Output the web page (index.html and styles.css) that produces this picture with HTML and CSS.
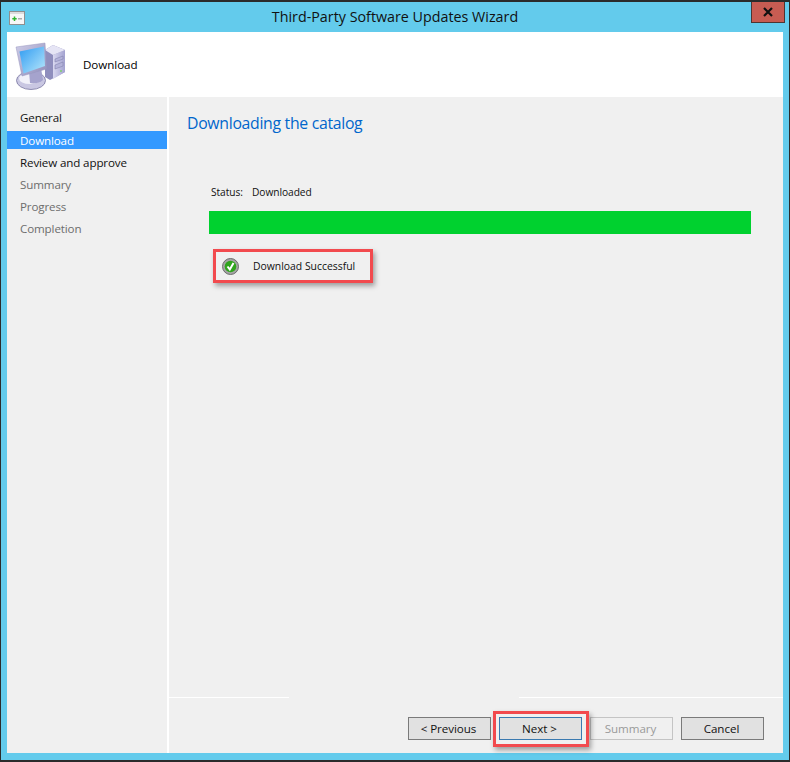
FILE: index.html
```html
<!DOCTYPE html>
<html lang="en">
<head>
<meta charset="utf-8">
<title>Third-Party Software Updates Wizard</title>
<link rel="stylesheet" href="styles.css">
</head>
<body>
<div class="window">
  <div class="titlebar">
    <svg class="app-icon" width="16" height="14" viewBox="0 0 16 14">
      <rect x="0.500" y="0.500" width="15" height="13" fill="#f7f7f7" stroke="#8f8f8f"/>
      <rect x="1" y="1" width="14" height="2" fill="#dcdcdc"/>
      <path d="M3.300 7.800h4.400M5.500 5.600v4.400" stroke="#2fb52f" stroke-width="1.500" fill="none"/>
      <path d="M9 7.800h4" stroke="#9a9a9a" stroke-width="1.200" fill="none"/>
    </svg>
    <div class="title">Third-Party Software Updates Wizard</div>
    <div class="close"><svg width="12" height="10" viewBox="0 0 12 10"><path d="M2 1l8 8M10 1l-8 8" stroke="#111" stroke-width="2.200" fill="none"/></svg></div>
  </div>
  <div class="client">
    <header class="banner">
      <svg class="computer" width="52" height="50" viewBox="0 0 52 50">
        <defs>
          <linearGradient id="scr" x1="0" y1="0" x2="1" y2="1"><stop offset="0" stop-color="#2f9bf2"/><stop offset="1" stop-color="#b8e8fb"/></linearGradient>
          <linearGradient id="tower" x1="0" y1="0" x2="1" y2="0"><stop offset="0" stop-color="#d9d8f0"/><stop offset="1" stop-color="#a3a2d0"/></linearGradient>
          <linearGradient id="bezel" x1="0" y1="0" x2="1" y2="1"><stop offset="0" stop-color="#cfcde8"/><stop offset="1" stop-color="#8f8db9"/></linearGradient>
        </defs>
        <path d="M30 8l8-5 12 5v22l-15 8-5-3z" fill="#8f8ebd"/>
        <path d="M38 13l12-5v22l-12 7z" fill="url(#tower)"/>
        <path d="M30 8l8-5 12 5-12 5z" fill="#e6e5f5"/>
        <path d="M40 17l8-3v3l-8 3zM40 23l8-3v4l-8 3z" fill="#b4b3da" stroke="#7b7aa6" stroke-width=".5"/>
        <circle cx="46" cy="29" r="1" fill="#7ccf6a"/>
        <ellipse cx="16" cy="38.500" rx="14.500" ry="9" fill="#c9c7e2" stroke="#77759f" stroke-width=".8"/>
        <ellipse cx="15" cy="36.500" rx="11" ry="5.500" fill="#f1f1f9"/>
        <path d="M14 29l12-3 2 12c-3 3-9 4-13 3z" fill="#a5a3cd"/>
        <path d="M1 5L30 1l1.500 26L7 34z" fill="url(#bezel)" stroke="#9896bf" stroke-width=".5"/>
        <path d="M4.500 9.500L29 4.500l1 19.500L8.500 31.500z" fill="url(#scr)"/>
      </svg>
      <span class="banner-text">Download</span>
    </header>
    <div class="body">
      <nav class="nav">
        <div class="nav-item">General</div>
        <div class="nav-item selected">Download</div>
        <div class="nav-item">Review and approve</div>
        <div class="nav-item muted">Summary</div>
        <div class="nav-item muted">Progress</div>
        <div class="nav-item muted">Completion</div>
      </nav>
      <main class="content">
        <div class="pane">
          <h1 class="heading">Downloading the catalog</h1>
          <div class="status"><span class="status-label">Status:</span><span>Downloaded</span></div>
          <div class="bar"></div>
          <div class="success">
            <svg width="17" height="17" viewBox="0 0 17 17">
              <circle cx="8.500" cy="8.500" r="8" fill="#a5a5a5" stroke="#6d6d6d"/>
              <circle cx="8.500" cy="8.500" r="5.800" fill="#2fa41c"/>
              <path d="M5.500 8.500l2.300 3 3.700-6.500" stroke="#fff" stroke-width="2" fill="none"/>
            </svg>
            <span>Download Successful</span>
          </div>
        </div>
        <div class="rule"><i class="rule-lit"></i><i class="rule-lit rule-end"></i></div>
        <footer class="footer">
          <button class="btn">&lt; Previous</button>
          <div class="next-wrap"><button class="btn default">Next &gt;</button><div class="highlight"></div></div>
          <button class="btn disabled">Summary</button>
          <button class="btn">Cancel</button>
        </footer>
      </main>
    </div>
  </div>
</div>
</body>
</html>
```
FILE: styles.css
```css
* { box-sizing: border-box; }
html, body { margin: 0; padding: 0; }
body {
  width: 790px;
  height: 762px;
  overflow: hidden;
  font-family: "Open Sans", "Noto Sans", sans-serif;
  font-size: 11.6px;
  letter-spacing: -0.05px;
  color: #000;
}
.window {
  width: 790px;
  height: 762px;
  background: #63cbec;
  border-top: 2px solid #2b2b2b;
  border-bottom: 2px solid #2b2b2b;
  border-left: 1px solid #2b2b2b;
  border-right: 1px solid #2b2b2b;
  padding: 0 6px 7px 6px;
  display: flex;
  flex-direction: column;
}
.titlebar {
  height: 30px;
  display: flex;
  align-items: center;
  justify-content: center;
  position: relative;
  margin: 0 -6px;
}
.app-icon { position: absolute; left: 8px; top: 9px; }
.title { font-size: 14.3px; letter-spacing: 0; color: #111; margin-bottom: 1px; }
.close {
  position: absolute;
  right: 4px;
  top: 0;
  width: 34px;
  height: 21px;
  background: #c75c52;
  border: 1px solid #4e3532;
  border-top: 0;
  display: flex;
  align-items: center;
  justify-content: center;
}
.client {
  flex: 1;
  display: flex;
  flex-direction: column;
  background: #fff;
  min-height: 0;
}
.banner {
  height: 65px;
  display: flex;
  align-items: center;
  padding-left: 8px;
}
.computer { margin-top: 5px; }
.banner-text { margin-left: 16px; margin-bottom: 1px; }
.body { flex: 1; display: flex; min-height: 0; }
.nav {
  width: 160px;
  background: #f0f0f0;
  padding-top: 11px;
  margin-right: 2px;
}
.nav-item {
  height: 22px;
  line-height: 22px;
  padding-left: 13px;
  letter-spacing: -0.13px;
  color: #111;
}
.nav-item:first-child { line-height: 20px; }
.nav-item.selected { background: #3399ff; color: #fff; height: 18px; line-height: 20px; margin: 1px 0 3px; }
.nav-item.muted { color: #6d6d6d; }
.content {
  flex: 1;
  background: #f0f0f0;
  display: flex;
  flex-direction: column;
}
.pane { flex: 1; padding: 15px 32px 0 18px; }
.heading {
  margin: 0;
  font-size: 15.8px;
  letter-spacing: -0.3px;
  font-weight: 400;
  line-height: 22px;
  color: #0066cc;
}
.status {
  margin: 50px 0 0 24px;
  display: flex;
  line-height: 16px;
  font-size: 10.2px;
  color: #111;
}
.status-label { width: 41px; }
.bar {
  margin: 11px 0 0 22px;
  height: 23px;
  background: #00d12f;
  width: 542px;
}
.success {
  margin: 15px 0 0 26px;
  width: 160px;
  height: 34px;
  border: 3px solid #f24a4e;
  box-shadow: 2px 3px 5px rgba(0,0,0,.35);
  display: flex;
  align-items: center;
  padding-left: 6px;
  gap: 14px;
  font-size: 10.4px;
  letter-spacing: 0;
  white-space: nowrap;
  color: #111;
}
.rule { height: 1px; display: flex; justify-content: space-between; }
.rule i { display: block; }
.rule-lit { background: #fff; width: 120px; }
.rule-lit.rule-end { width: 264px; }
.footer {
  height: 55px;
  display: flex;
  padding: 19px 19px 0 0;
  justify-content: flex-end;
  gap: 8px;
}
.btn {
  width: 83px;
  height: 23px;
  padding: 0 2px 1px 0;
  font: inherit;
  letter-spacing: inherit;
  background: #e1e1e1;
  border: 1px solid #7a7a7a;
  color: #111;
}
.btn.default { border-color: #3a7ab0; display: block; }
.btn.disabled { background: #f0f0f0; border-color: #c4c4c4; color: #9a9a9a; }
.next-wrap { position: relative; height: 23px; }
.highlight {
  position: absolute;
  left: -6px;
  top: -6px;
  width: 96px;
  height: 36px;
  border: 3px solid #f24a4e;
  box-shadow: 2px 3px 5px rgba(0,0,0,.35);
  pointer-events: none;
}
```
